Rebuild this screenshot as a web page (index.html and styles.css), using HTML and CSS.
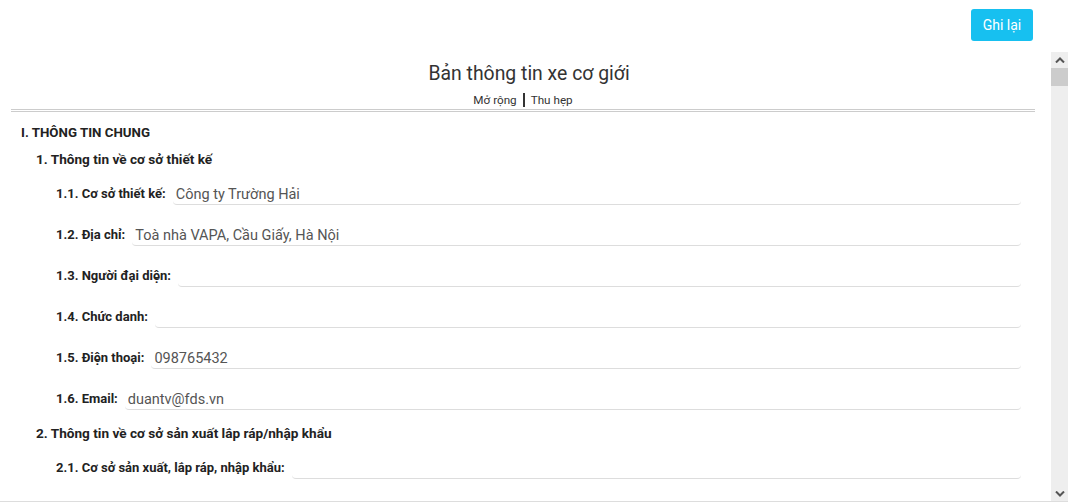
FILE: index.html
```html
<!DOCTYPE html>
<html lang="vi">
<head>
    <meta charset="UTF-8">
    <title>Bản thông tin xe cơ giới</title>
    <link rel="stylesheet" href="styles.css">
</head>
<body>
    <div class="toolbar">
        <button type="button" class="save-btn">Ghi lại</button>
    </div>
    <div class="viewer">
        <div class="sheet">
            <h1 class="sheet-title">Bản thông tin xe cơ giới</h1>
            <div class="toggle">
                <a href="#">Mở rộng</a><span class="sep"></span><a href="#">Thu hẹp</a>
            </div>
            <div class="divider"></div>

            <div class="section">I. THÔNG TIN CHUNG</div>
            <div class="group">1. Thông tin về cơ sở thiết kế</div>
            <div class="field">
                <label>1.1. Cơ sở thiết kế:</label>
                <input type="text" value="Công ty Trường Hải">
            </div>
            <div class="field">
                <label>1.2. Địa chỉ:</label>
                <input type="text" value="Toà nhà VAPA, Cầu Giấy, Hà Nội">
            </div>
            <div class="field">
                <label>1.3. Người đại diện:</label>
                <input type="text" value="">
            </div>
            <div class="field">
                <label>1.4. Chức danh:</label>
                <input type="text" value="">
            </div>
            <div class="field">
                <label>1.5. Điện thoại:</label>
                <input type="text" value="098765432">
            </div>
            <div class="field">
                <label>1.6. Email:</label>
                <input type="text" value="duantv@fds.vn">
            </div>
            <div class="group">2. Thông tin về cơ sở sản xuất lắp ráp/nhập khẩu</div>
            <div class="field">
                <label>2.1. Cơ sở sản xuất, lắp ráp, nhập khẩu:</label>
                <input type="text" value="">
            </div>
        </div>
        <div class="scrollbar">
            <div class="scroll-btn">
                <svg width="10" height="6" viewBox="0 0 10 6"><path d="M1 5.5 L5 1.5 L9 5.5" fill="none" stroke="#555" stroke-width="2"/></svg>
            </div>
            <div class="scroll-thumb"></div>
            <div class="scroll-track"></div>
            <div class="scroll-btn">
                <svg width="10" height="6" viewBox="0 0 10 6"><path d="M1 0.5 L5 4.5 L9 0.5" fill="none" stroke="#555" stroke-width="2"/></svg>
            </div>
        </div>
    </div>
</body>
</html>
```

FILE: styles.css
```css
body {
    margin: 0;
    font-family: Roboto, "Liberation Sans", sans-serif;
    color: #333;
    background: #fff;
}

.toolbar {
    height: 52px;
    display: flex;
    justify-content: flex-end;
    align-items: flex-start;
    padding-right: 35px;
    box-sizing: border-box;
}

.save-btn {
    margin-top: 9px;
    width: 62px;
    height: 32px;
    border: none;
    border-radius: 3px;
    background: #17c0f0;
    color: #fff;
    font-family: Roboto, "Liberation Sans", sans-serif;
    font-size: 14px;
    cursor: pointer;
}

.viewer {
    display: flex;
    height: 450px;
    border-bottom: 1px solid #ddd;
    box-sizing: border-box;
}

.sheet {
    flex: 1;
    overflow: hidden;
    padding: 0 16px 0 11px;
}

.sheet-title {
    margin: 9px 0 0;
    font-size: 19.4px;
    font-weight: normal;
    line-height: 26px;
    text-align: center;
    color: #333;
    padding-left: 12px;
}

.toggle {
    margin-top: 5px;
    display: flex;
    justify-content: center;
    align-items: center;
    font-size: 11.7px;
    line-height: 16px;
}

.toggle a {
    color: #333;
    text-decoration: none;
}

.sep {
    display: inline-block;
    width: 2px;
    height: 14px;
    background: #333;
    margin: 0 6px;
}

.divider {
    margin-top: 1px;
    border-top: 3px double #ccc;
}

.section {
    margin: 13px 0 0 10px;
    font-size: 13.3px;
    font-weight: bold;
    color: #222;
    line-height: 16px;
}

.group {
    margin: 10px 0 0 25px;
    font-size: 13.6px;
    font-weight: bold;
    color: #222;
    line-height: 16px;
}

.field + .group {
    margin-top: 15px;
}

.field {
    display: flex;
    align-items: flex-end;
    margin: 11px 14px 0 45px;
    height: 30px;
}

.group + .field {
    margin-top: 8px;
}

.field label {
    font-size: 13px;
    font-weight: bold;
    color: #222;
    line-height: 16px;
    margin-bottom: 3px;
    white-space: nowrap;
}

.field input {
    flex: 1;
    margin-left: 7px;
    height: 20px;
    padding: 0 3px;
    border: none;
    border-bottom: 1px solid #ddd;
    border-radius: 4px;
    font-family: Roboto, "Liberation Sans", sans-serif;
    font-size: 14.5px;
    color: #555;
    outline: none;
    background: transparent;
}

.scrollbar {
    width: 17px;
    background: #eee;
    display: flex;
    flex-direction: column;
}

.scroll-btn {
    height: 15px;
    display: flex;
    align-items: center;
    justify-content: center;
}

.scroll-thumb {
    height: 18px;
    margin: 1px 0 0 0;
    background: #ccc;
}

.scroll-track {
    flex: 1;
}
```
